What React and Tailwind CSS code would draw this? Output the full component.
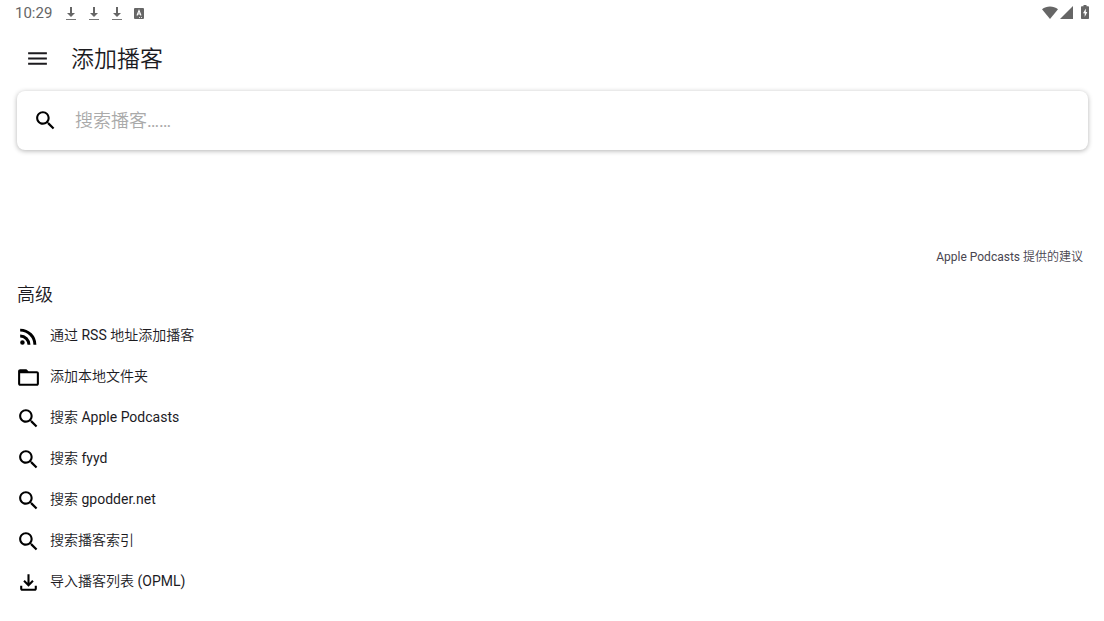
const MaterialIcon = ({ d, className = 'size-[25px]' }) => (
  <svg viewBox="0 0 24 24" fill="currentColor" aria-hidden="true" className={`shrink-0 ${className}`}>
    <path d={d} />
  </svg>
)

const icons = {
  menu: 'M3 18h18v-2H3v2zm0-5h18v-2H3v2zm0-7v2h18V6H3z',
  search:
    'M15.5 14h-.79l-.28-.27C15.41 12.59 16 11.11 16 9.5 16 5.91 13.09 3 9.5 3S3 5.91 3 9.5 5.91 16 9.5 16c1.61 0 3.09-.59 4.23-1.57l.27.28v.79l5 4.99L20.49 19l-4.99-5zm-6 0C7.01 14 5 11.99 5 9.5S7.01 5 9.5 5 14 7.01 14 9.5 11.99 14 9.5 14z',
  feed:
    'M6.18 15.64a2.18 2.18 0 1 1 0 4.36 2.18 2.18 0 0 1 0-4.36zM4 4.44A15.56 15.56 0 0 1 19.56 20h-2.83A12.73 12.73 0 0 0 4 7.27V4.44zm0 5.66a9.9 9.9 0 0 1 9.9 9.9h-2.83A7.07 7.07 0 0 0 4 12.93V10.1z',
  folder:
    'M20 6h-8l-2-2H4c-1.1 0-1.99.9-1.99 2L2 18c0 1.1.9 2 2 2h16c1.1 0 2-.9 2-2V8c0-1.1-.9-2-2-2zm0 12H4V8h16v10z',
  download:
    'M18 15v3H6v-3H4v3c0 1.1.9 2 2 2h12c1.1 0 2-.9 2-2v-3h-2zm-1-4l-1.41-1.41L13 12.17V4h-2v8.17L8.41 9.59 7 11l5 5 5-5z',
}

const actions = [
  { icon: icons.feed, label: '通过 RSS 地址添加播客' },
  { icon: icons.folder, label: '添加本地文件夹' },
  { icon: icons.search, label: '搜索 Apple Podcasts' },
  { icon: icons.search, label: '搜索 fyyd' },
  { icon: icons.search, label: '搜索 gpodder.net' },
  { icon: icons.search, label: '搜索播客索引' },
  { icon: icons.download, label: '导入播客列表 (OPML)' },
]

const DownloadDone = () => (
  <svg viewBox="0 0 12 15" className="w-3 h-[15px]" aria-hidden="true">
    <path d="M5 1h2v6h3l-4 4-4-4h3z" fill="#666" />
    <path d="M1 13h10v1H1z" fill="#777" />
  </svg>
)

const StatusBar = () => (
  <div className="flex items-center justify-between h-[26px] px-[15px] text-[#666]">
    <div className="flex items-center">
      <span className="text-[15px]">10:29</span>
      <div className="flex items-center gap-[11px] ml-[13px]">
        <DownloadDone />
        <DownloadDone />
        <DownloadDone />
        <svg viewBox="0 0 10 11" className="w-[10px] h-[11px]" aria-hidden="true">
          <rect width="10" height="11" rx="1" fill="#666" />
          <path d="M3 7.5 5 2.5l2 5M3.6 6h2.8" fill="none" stroke="#fff" strokeWidth="1.1" />
          <path d="M5 9h1v1H5zM7 9h1v1H7z" fill="#ddd" />
        </svg>
      </div>
    </div>
    <div className="flex items-center pb-[2px]">
      <svg viewBox="0 0 16 13" className="w-4 h-[13px]" aria-hidden="true">
        <path d="M0 3.3C4.6-.4 11.4-.4 16 3.3L8 13z" fill="#666" />
      </svg>
      <svg viewBox="0 0 13 13" className="w-[13px] h-[13px] ml-[2px]" aria-hidden="true">
        <path d="M13 0v13H0z" fill="#666" />
      </svg>
      <svg viewBox="0 0 8 14" className="w-2 h-[14px] ml-2" aria-hidden="true">
        <path d="M2.5 0h3v1.3H7.2q.8 0 .8.8v11.1q0 .8-.8.8H.8q-.8 0-.8-.8V2.1q0-.8.8-.8h1.7z" fill="#666" />
        <path d="M4.8 3.5 2 8.3h1.7V12L6.3 7H4.8z" fill="#fff" />
      </svg>
    </div>
  </div>
)

const SearchCard = () => (
  <label className="flex items-center ml-[17px] mr-4 h-[59px] px-4 bg-white rounded-lg shadow-[0_1px_5px_rgba(0,0,0,0.3)]">
    <MaterialIcon d={icons.search} className="size-[25px] text-black" />
    <input
      type="search"
      aria-label="搜索播客"
      placeholder="搜索播客……"
      className="flex-1 min-w-0 ml-[17px] text-lg bg-transparent outline-none placeholder:text-[#aaa]"
    />
  </label>
)

export default function App() {
  return (
    <div className="min-h-screen bg-white text-[#1c1b1f] font-[Roboto,'Noto_Sans_CJK_SC_DemiLight','Noto_Sans_CJK_SC',sans-serif]">
      <StatusBar />
      <header className="flex items-center h-[65px] px-[25px] gap-[21px]">
        <button type="button" aria-label="菜单">
          <MaterialIcon d={icons.menu} />
        </button>
        <h1 className="pt-[2px] text-[23px] leading-8">添加播客</h1>
      </header>
      <main>
        <SearchCard />
        <p className="mt-[97px] mr-[21px] text-right text-xs leading-5 text-[#49454f]">Apple Podcasts 提供的建议</p>
        <h2 className="mt-4 ml-[17px] text-lg leading-6">高级</h2>
        <ul className="mt-[9px]">
          {actions.map(({ icon, label }) => (
            <li key={label}>
              <button type="button" className="flex items-center w-full h-[41px] px-4 gap-[9px] text-sm text-left">
                <MaterialIcon d={icon} className="size-[25px] text-black" />
                <span className="pb-[3px]">{label}</span>
              </button>
            </li>
          ))}
        </ul>
      </main>
    </div>
  )
}
